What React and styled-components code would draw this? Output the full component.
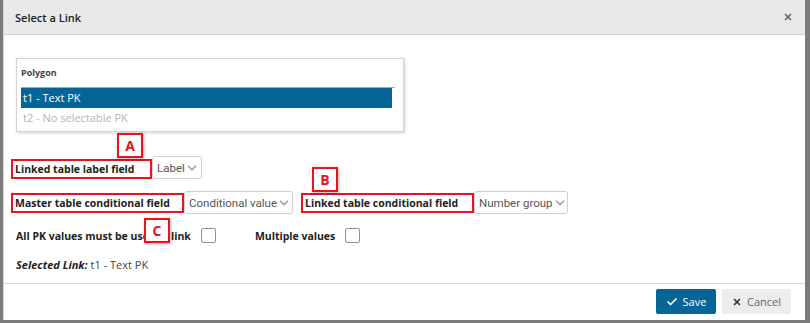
import React from 'react'
import styled, { createGlobalStyle } from 'styled-components'
import { ChevronDown, Check, X } from 'lucide-react'

const GlobalStyle = createGlobalStyle`
  html, body {
    margin: 0;
    padding: 0;
    background: #7b7b7b;
  }
  body {
    font-family: "Open Sans", "Liberation Sans", sans-serif;
    color: #333;
  }
`;

const Page = styled.div`
  width: 810px;
  height: 323px;
  padding: 0 5px 3px 3px;
  box-sizing: border-box;
`;

const Dialog = styled.div`
  position: relative;
  height: 320px;
  background: #fff;
  border-left: 1px solid #d6d6d6;
  box-sizing: border-box;
  display: flex;
  flex-direction: column;
`;

const Header = styled.div`
  height: 35px;
  background: #e9e9e9;
  border-bottom: 1px solid #d2d2d2;
  box-sizing: border-box;
  display: flex;
  align-items: center;
  justify-content: space-between;
  padding: 0 12px 0 11px;
`;

const Title = styled.h4`
  margin: 0;
  font-size: 11px;
  font-weight: 600;
  color: #222;
`;

const Close = styled.span`
  display: flex;
  color: #666;
`;

const Body = styled.div`
  flex: 1;
  padding: 23px 0 0 12px;
`;

const ListPanel = styled.div`
  width: 388px;
  height: 74px;
  border: 1px solid #d4d4d4;
  box-shadow: 1px 1px 3px rgba(0, 0, 0, 0.18);
  padding: 7px 4px 0 4px;
  box-sizing: border-box;
`;

const PanelTitle = styled.div`
  font-size: 9px;
  font-weight: 700;
  color: #444;
  height: 21px;
  border-bottom: 1px solid #a8a8a8;
  margin-right: 4px;
`;

const Option = styled.div`
  width: 371px;
  height: 20px;
  font-size: 11px;
  line-height: 20px;
  padding-left: 2px;
  box-sizing: border-box;
  background: ${p => (p.selected ? '#046596' : 'transparent')};
  color: ${p => (p.selected ? '#fff' : '#b4b4b4')};
`;

const Row = styled.div`
  display: flex;
  align-items: center;
  margin-left: ${p => p.indent || 0}px;
  margin-top: ${p => p.top || 0}px;
`;

const FieldGroup = styled.div`
  display: flex;
  align-items: ${p => p.align || 'center'};
  margin-right: ${p => p.gap || 0}px;
`;

const FieldLabel = styled.label`
  height: 20px;
  width: ${p => p.width}px;
  box-sizing: border-box;
  border: 2px solid ${p => (p.marked ? '#e8141c' : 'transparent')};
  padding: 0 2px;
  font-size: 10.5px;
  font-weight: 700;
  color: #222;
  display: flex;
  align-items: center;
  white-space: nowrap;
`;

const Select = styled.div`
  height: 23px;
  width: ${p => p.width}px;
  box-sizing: border-box;
  border: 1px solid #cfcfcf;
  border-radius: 3px;
  display: flex;
  align-items: center;
  justify-content: space-between;
  padding: 0 5px 0 4px;
  font-family: Roboto, "Liberation Sans", sans-serif;
  font-size: 11.5px;
  color: #555;
  white-space: nowrap;
  svg {
    color: #a0a0a0;
    flex-shrink: 0;
  }
`;

const CheckText = styled.span`
  font-size: 10.5px;
  font-weight: 700;
  color: #222;
  margin-right: ${p => p.gap || 8}px;
`;

const Box = styled.span`
  display: inline-block;
  width: 15px;
  height: 15px;
  box-sizing: border-box;
  border: 1px solid #8e8e8e;
  border-radius: 2px;
  background: #fff;
  margin-right: ${p => p.gap || 0}px;
`;

const Selected = styled.div`
  margin-top: 14px;
  font-size: 11px;
  color: #444;
  b {
    font-style: italic;
    font-weight: 700;
    color: #222;
  }
`;

const Footer = styled.div`
  height: 37px;
  box-sizing: border-box;
  border-top: 1px solid #d8d8d8;
  display: flex;
  justify-content: flex-end;
  align-items: flex-start;
  gap: 6px;
  padding: 5px 14px 0 0;
`;

const Button = styled.button`
  height: 25px;
  width: ${p => p.width}px;
  border: none;
  border-radius: 2px;
  display: flex;
  align-items: center;
  justify-content: center;
  gap: 5px;
  font-family: "Open Sans", "Liberation Sans", sans-serif;
  font-size: 11px;
  background: ${p => (p.primary ? '#046596' : '#ececec')};
  color: ${p => (p.primary ? '#fff' : '#666')};
  svg {
    color: ${p => (p.primary ? '#fff' : '#333')};
  }
`;

const Marker = styled.div`
  position: absolute;
  left: ${p => p.x}px;
  top: ${p => p.y}px;
  width: 26px;
  height: 25px;
  box-sizing: border-box;
  border: 2px solid #e8141c;
  background: #fff;
  box-shadow: 1px 1px 3px rgba(0, 0, 0, 0.3);
  color: #e8141c;
  font-weight: 700;
  font-size: 14px;
  display: flex;
  align-items: center;
  justify-content: center;
`;

export default function App() {
  return (
    <>
      <GlobalStyle />
      <Page>
        <Dialog>
          <Header>
            <Title>Select a Link</Title>
            <Close><X size={10} strokeWidth={4} /></Close>
          </Header>

          <Body>
            <ListPanel>
              <PanelTitle>Polygon</PanelTitle>
              <Option selected>t1 - Text PK</Option>
              <Option>t2 - No selectable PK</Option>
            </ListPanel>

            <Row indent={-5} top={24}>
              <FieldGroup align="flex-end">
                <FieldLabel marked width={141}>Linked table label field</FieldLabel>
                <Select width={50}>Label <ChevronDown size={14} strokeWidth={3} /></Select>
              </FieldGroup>
            </Row>

            <Row indent={-5} top={12}>
              <FieldGroup gap={8}>
                <FieldLabel marked width={173}>Master table conditional field</FieldLabel>
                <Select width={109}>Conditional value <ChevronDown size={14} strokeWidth={3} /></Select>
              </FieldGroup>
              <FieldGroup>
                <FieldLabel marked width={173}>Linked table conditional field</FieldLabel>
                <Select width={94}>Number group <ChevronDown size={14} strokeWidth={3} /></Select>
              </FieldGroup>
            </Row>

            <Row top={14}>
              <CheckText gap={10}>All PK values must be used in link</CheckText>
              <Box gap={39} />
              <CheckText gap={10}>Multiple values</CheckText>
              <Box />
            </Row>

            <Selected><b>Selected Link:</b> t1 - Text PK</Selected>
          </Body>

          <Footer>
            <Button primary width={60}><Check size={12} strokeWidth={3.5} />Save</Button>
            <Button width={69}><X size={10} strokeWidth={4} />Cancel</Button>
          </Footer>

          <Marker x={113} y={133}>A</Marker>
          <Marker x={308} y={167}>B</Marker>
          <Marker x={140} y={218}>C</Marker>
        </Dialog>
      </Page>
    </>
  )
}
